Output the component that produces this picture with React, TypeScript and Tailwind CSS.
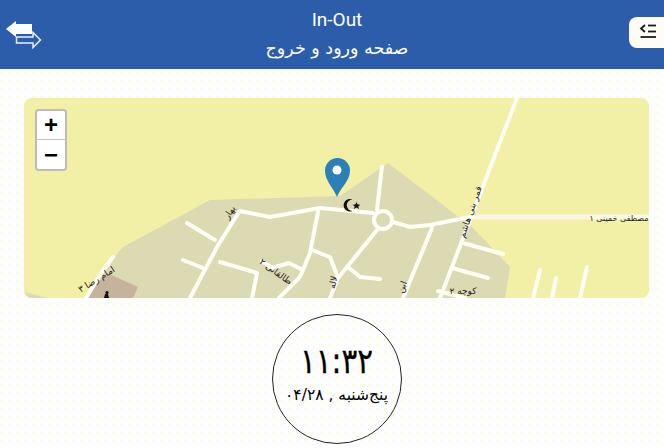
const roads: string[] = [
  "M240 211 L270 217 L320 208 L373 213",
  "M382 167 L380 183 L377 210",
  "M393 222 L410 227 L430 225 L470 217",
  "M517 98 L440 298",
  "M463 243 L503 254",
  "M452 268 L488 278",
  "M438 291 L465 298",
  "M540 270 L533 298",
  "M556 278 L552 298",
  "M587 267 L580 298",
  "M239 212 L217 247 L190 298",
  "M187 223 L215 240",
  "M183 260 L203 268",
  "M318 212 L310 253 L300 277 L279 298",
  "M220 262 L257 273 L252 298",
  "M262 261 L272 268 L289 263 L303 270",
  "M312 250 L330 257 L338 278 L330 298",
  "M377 230 L338 278",
  "M348 267 L360 277 L380 279",
  "M432 228 L403 298",
  "M113 257 L102 272 L86 298",
];

function MapArt() {
  return (
    <svg viewBox="24 98 625 200" className="block h-[200px] w-[625px]">
      <rect x="24" y="98" width="625" height="200" fill="#f2efa6" />
      <polygon
        points="84,298 505,298 510,267 473,228 430,195 388,163 340,196 210,200 123,247 100,275"
        fill="#dcdab2"
      />
      <polygon points="24,292 47,298 24,298" fill="#dcdab2" />
      <polygon points="107,273 138,287 133,298 84,298" fill="#c7b39c" />
      <path d="M473 217 L649 217" stroke="#f9f8e6" strokeWidth="5" fill="none" />
      {roads.map((d) => (
        <path key={d} d={d} stroke="#fffff6" strokeWidth="4" strokeLinecap="round" strokeLinejoin="round" fill="none" />
      ))}
      <circle cx="383" cy="220" r="9" stroke="#fffff6" strokeWidth="4" fill="#dcdab2" />
      <path d="M104 298 L105 294 L108 294 L109 298 Z M107 291 a1.6 1.6 0 1 0 .01 0" fill="#111" />
      <path d="M352.500 199.500 a6.300 6.300 0 1 0 0 11.500 a5.200 5.200 0 1 1 0 -11.500 Z" fill="#111" />
      <polygon points="356.500,202 357.700,204.500 360.300,204.700 358.300,206.400 359,209 356.500,207.600 354,209 354.700,206.400 352.700,204.700 355.300,204.500" fill="#111" />
      <path
        d="M337 197 C333 187 325 181 325 170.500 A12.500 12.500 0 0 1 350 170.500 C350 181 341 187 337 197 Z"
        fill="#2b80b8"
      />
      <circle cx="337" cy="170" r="4.500" fill="#ffffff" />
      <g fontFamily="'DejaVu Sans', sans-serif" fontSize="9" fill="#222222" direction="rtl">
        <text transform="translate(232 214) rotate(-57)" textAnchor="middle">بهار</text>
        <text transform="translate(274 274) rotate(36)" textAnchor="middle">طالقانی ۲</text>
        <text transform="translate(98 282) rotate(-32)" textAnchor="middle">امام رضا ۳</text>
        <text transform="translate(473 213) rotate(-71)" textAnchor="middle">قمر بنی هاشم</text>
        <text transform="translate(619 221)" textAnchor="middle" fontSize="8">مصطفی خمینی ۱</text>
        <text transform="translate(336 283) rotate(-78)" textAnchor="middle">لاله</text>
        <text transform="translate(405 288) rotate(-68)" textAnchor="middle">ابن</text>
        <text transform="translate(463 294)" textAnchor="middle">کوچه ۲</text>
      </g>
    </svg>
  );
}

export default function App() {
  return (
    <div className="flex h-[448px] w-[664px] flex-col overflow-hidden bg-[#fdfdfe] bg-[radial-gradient(circle_at_1px_1px,#fdfcc0_0.6px,transparent_0.9px)] bg-[length:8px_8px] font-['DejaVu_Sans',sans-serif] text-black">
      <header className="flex h-[69px] shrink-0 items-start bg-[#2c5dab] text-white">
        <div className="w-[45px] shrink-0 pl-[6px] pt-[21px]">
          <svg width="36" height="28" viewBox="0 0 36 28">
            <polygon points="0,8 10,0 10,3 26,3 26,13 10,13 10,16" fill="#ffffff" />
            <polygon points="10.500,16 27,16 27,11.500 34.500,19 27,26.500 27,22 10.500,22" fill="none" stroke="#eaf0fb" strokeWidth="1.500" />
          </svg>
        </div>
        <div className="flex-1 text-center" dir="rtl">
          <div className="pt-[8px] font-['Roboto',sans-serif] text-[19px] leading-[23px]" dir="ltr">In-Out</div>
          <div className="text-[17.500px] leading-[34px]">صفحه ورود و خروج</div>
        </div>
        <div className="mt-[17px] flex h-[31px] w-[35px] shrink-0 items-center rounded-l-lg bg-[#fdfdf6] pl-[10px] pb-[1px]">
          <svg width="18" height="18" viewBox="0 0 18 18" fill="none" stroke="#1b1b1b" strokeWidth="1.800">
            <path d="M6 2 L2 5.500 L6 9" />
            <path d="M9 2.500 H17" />
            <path d="M9 8.500 H17" />
            <path d="M1.500 14 H17" />
          </svg>
        </div>
      </header>
      <main className="flex flex-1 flex-col pl-[24px] pr-[15px] pt-[29px]">
        <div className="relative h-[200px] w-[625px] overflow-hidden rounded-lg">
          <MapArt />
          <div className="absolute left-[11px] top-[11px] flex w-[32px] flex-col overflow-hidden rounded border-2 border-[#bcbcb4] bg-white font-['Liberation_Sans',sans-serif] text-[24px] font-bold leading-[30px] text-black">
            <div className="flex h-[29px] items-center justify-center border-b border-[#c4c4c4]">+</div>
            <div className="flex h-[29px] items-center justify-center">−</div>
          </div>
        </div>
        <div className="mx-auto mt-[16px] flex h-[130px] w-[130px] shrink-0 flex-col items-center rounded-full border border-[#222222] pt-[26px] text-center" dir="rtl">
          <div className="scale-x-[0.84] text-[35px] leading-[40px] [-webkit-text-stroke:0.3px_black]">۱۱:۳۲</div>
          <div className="mt-[4px] whitespace-nowrap text-[15.500px] leading-[20px]">پنج‌شنبه , ۰۴/۲۸</div>
        </div>
      </main>
    </div>
  );
}
